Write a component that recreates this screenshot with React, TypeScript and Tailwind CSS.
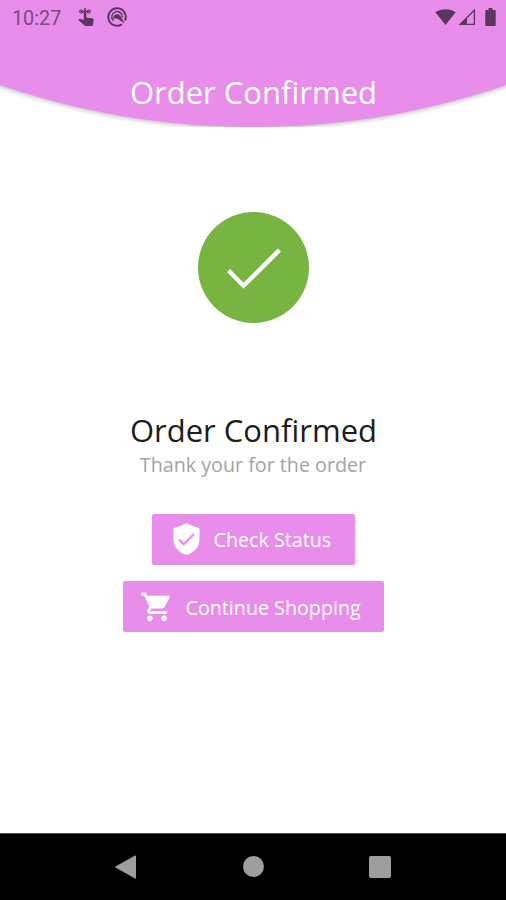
import React from 'react';
import { MdShoppingCart } from 'react-icons/md';

function TouchIcon() {
  return (
    <svg className="w-[18px] h-[20px]" viewBox="0 0 18 20" fill="none">
      <path d="M8 8V1.500M4 4.500h8" stroke="#5a3560" strokeWidth="1.500" strokeLinecap="round" />
      <circle cx="4.200" cy="4.500" r="1.700" stroke="#5a3560" />
      <circle cx="11.800" cy="4.500" r="1.700" stroke="#5a3560" />
      <path d="M6.700 5.500h2.700v5l5.700.8c1 .2 1.600 1 1.500 2l-.8 4.600c-.1.700-.6 1.100-1.300 1.100H8.200L1.300 13l1-1c.4-.3.900-.3 1.300-.1l3.100 1.200z" fill="#5a3560" />
    </svg>
  );
}

function RadarIcon() {
  return (
    <svg className="w-5 h-5" viewBox="0 0 20 20" fill="none" stroke="#5a3560">
      <path d="M18 13.500A8.700 8.700 0 1 0 14.800 17.300" strokeWidth="2" />
      <path d="M6.500 13.700A5.300 5.300 0 1 1 15.300 10.500" strokeWidth="1.400" />
      <path d="M6.500 10C7.500 7 11.500 6.300 13.300 9L17.300 16l-6.500-4.300c-1.600-.6-2.800-.3-4.300-.2z" fill="#5a3560" strokeWidth=".4" />
    </svg>
  );
}

function StatusBar() {
  return (
    <div className="relative flex items-center justify-between h-[35px] pl-3 pr-[10px] text-[#7b4a80]">
      <div className="flex items-center">
        <span className="w-[65px] pt-[2px] text-[19.800px] leading-none font-['Roboto',sans-serif]">10:27</span>
        <TouchIcon />
        <span className="w-3" />
        <RadarIcon />
      </div>
      <div className="flex items-center -mt-px">
        <svg className="w-[21px] h-[18px]" viewBox="0 0 21 18" fill="#5a3560">
          <path d="M.3 4.200C6 .1 15 .1 20.700 4.200L10.500 17z" />
        </svg>
        <svg className="w-[18px] h-[18px] ml-[2px]" viewBox="0 0 18 18" fill="none">
          <path d="M16.400 2v14.300H2.200z" stroke="#5a3560" strokeWidth="1.300" />
          <path d="M9 9.500V17H1z" fill="#5a3560" />
        </svg>
        <svg className="w-[11px] h-[18px] ml-[9px]" viewBox="0 0 11 18" fill="#5a3560">
          <path d="M3.500 0h4v2h2.200c.6 0 1 .4 1 1v14c0 .6-.4 1-1 1H1.300c-.6 0-1-.4-1-1V3c0-.6.4-1 1-1h2.200z" />
        </svg>
      </div>
    </div>
  );
}

function ShieldIcon() {
  return (
    <svg className="w-[27px] h-8 -mt-px" viewBox="0 0 27 32">
      <path d="M12.700.5Q13.500.1 14.300.5Q19 3 25.200 4.700Q26.500 5 26.500 6.300V16.500C26.500 24.500 20.500 29.800 15 31.400Q13.500 31.800 12 31.400C6.500 29.800.5 24.500.5 16.500V6.300Q.5 5 1.800 4.700Q8 3 12.700.5z" fill="#fff" />
      <path d="M6 16.500l4.700 4.700L21 11" fill="none" stroke="#e88eea" strokeWidth="2.200" />
    </svg>
  );
}

export default function App() {
  return (
    <div className="flex flex-col h-[900px] w-[506px] bg-white overflow-hidden font-['Open_Sans',sans-serif]">
      <header className="relative h-[127px] overflow-hidden">
        <div className="absolute bottom-0 left-1/2 -translate-x-1/2 size-[1566px] rounded-full bg-[#e88eea] shadow-[0_1px_5px_rgba(0,0,0,0.3)]" />
        <StatusBar />
        <h1 className="relative mt-[35px] pl-px text-center text-[31px] leading-[44px] text-white">Order Confirmed</h1>
      </header>

      <main className="flex-1 flex flex-col items-center">
        <div className="mt-[85px] size-[111px] rounded-full bg-[#78b441]">
          <svg className="w-full h-full" viewBox="0 0 111 111" fill="none">
            <path d="M30.500 58.500l15 15.200L81.500 38" stroke="#fff" strokeWidth="4.400" />
          </svg>
        </div>
        <h2 className="mt-[85px] pl-px text-[31px] leading-[44px] text-[#1c1c1c]">Order Confirmed</h2>
        <p className="mt-px text-[19.700px] leading-[24px] text-[#a3a3a3]">Thank your for the order</p>

        <button className="mt-[37px] flex items-center w-[203px] h-[51px] pl-[21px] rounded-[2px] bg-[#e88eea] text-white text-[19.700px]">
          <ShieldIcon />
          <span className="ml-[14px]">Check Status</span>
        </button>
        <button className="mt-[16px] flex items-center w-[261px] h-[51px] pl-[17px] rounded-[2px] bg-[#e88eea] text-white text-[19.700px]">
          <MdShoppingCart className="w-[34px] h-[34px]" />
          <span className="ml-[12px] pt-[2px]">Continue Shopping</span>
        </button>
      </main>

      <nav className="relative h-[67px] flex items-center bg-black border-t border-[#555]">
        <svg className="w-[21px] h-6 ml-[115px] -mt-px" viewBox="0 0 21 24" fill="#9e9e9e">
          <path d="M20 .5c.5-.3 1 0 1 .5v22c0 .5-.5.8-1 .5L.5 12.500c-.5-.3-.5-.7 0-1z" />
        </svg>
        <span className="ml-[107px] -mt-px size-[21px] rounded-full bg-[#9e9e9e]" />
        <span className="ml-[105px] -mt-px w-[22px] h-[22px] rounded-[2px] bg-[#9e9e9e]" />
      </nav>
    </div>
  );
}
